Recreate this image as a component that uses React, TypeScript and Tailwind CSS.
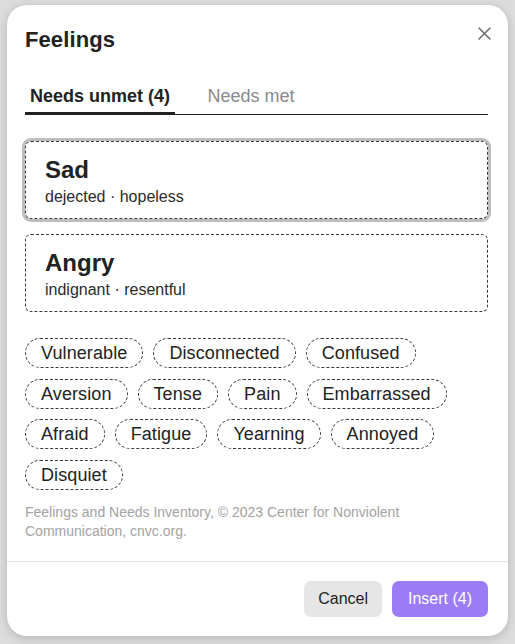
import { useState } from "react";

const FEELINGS = [
  { title: "Sad", words: "dejected · hopeless" },
  { title: "Angry", words: "indignant · resentful" },
];

const CHIPS = [
  "Vulnerable",
  "Disconnected",
  "Confused",
  "Aversion",
  "Tense",
  "Pain",
  "Embarrassed",
  "Afraid",
  "Fatigue",
  "Yearning",
  "Annoyed",
  "Disquiet",
];

function CloseIcon() {
  return (
    <svg width="13" height="13" viewBox="0 0 13 13" fill="none">
      <path d="M1 1L12 12M12 1L1 12" stroke="#6b6b6b" strokeWidth="1.5" strokeLinecap="round" />
    </svg>
  );
}

export default function App() {
  const [tab, setTab] = useState<"unmet" | "met">("unmet");

  return (
    <div
      className="h-[644px] w-[515px] overflow-hidden bg-[#dcdcdc] pl-[7px] pt-[5px]"
      style={{ fontFamily: '"Liberation Sans", Arial, sans-serif' }}
    >
      <div className="relative flex h-[631px] w-[501px] flex-col rounded-[20px] bg-white text-[#222] shadow-[0_2px_10px_rgba(0,0,0,0.18)]">
        <button className="absolute right-[17px] top-[21px] flex h-[14px] w-[14px] items-center justify-center" aria-label="Close">
          <CloseIcon />
        </button>

        <div className="flex flex-1 flex-col pl-[18px] pr-[20px]">
          <h2 className="mt-[20px] h-[30px] text-[22px] font-bold leading-[30px] tracking-[0.1px]">Feelings</h2>

          {/* tabs */}
          <div className="mt-[26px] flex border-b border-[#222]">
            <button
              onClick={() => setTab("unmet")}
              className={`-mb-px flex h-[34px] w-[150px] items-start justify-center border-b-[3px] pt-[4px] text-[18px] leading-[22px] ${
                tab === "unmet" ? "border-[#222] font-bold text-[#222]" : "border-transparent text-[#8a8a8a]"
              }`}
            >
              Needs unmet (4)
            </button>
            <button
              onClick={() => setTab("met")}
              className={`-mb-px ml-[29px] flex h-[34px] w-[94px] items-start justify-center border-b-[3px] pt-[4px] text-[18px] leading-[22px] ${
                tab === "met" ? "border-[#222] font-bold text-[#222]" : "border-transparent text-[#8a8a8a]"
              }`}
            >
              Needs met
            </button>
          </div>

          {/* selected feelings */}
          <div className="mt-[26px] flex flex-col gap-[15px]">
            {FEELINGS.map((f, i) => (
              <div
                key={f.title}
                className={`flex h-[78px] flex-col rounded-[6px] border border-dashed border-[#3a3a3a] px-[19px] pt-[13px] ${
                  i === 0 ? "shadow-[0_0_0_3px_#bdbdbd]" : ""
                }`}
              >
                <div className="text-[24px] font-bold leading-[30px]">{f.title}</div>
                <div className="mt-[2px] text-[16px] leading-[20px] text-[#2a2a2a]">{f.words}</div>
              </div>
            ))}
          </div>

          {/* feeling chips */}
          <div className="mt-[26px] flex flex-wrap gap-x-[10px] gap-y-[10.5px]">
            {CHIPS.map((c) => (
              <button
                key={c}
                className="flex h-[30px] items-center rounded-full border border-dashed border-[#3a3a3a] px-[15px] text-[18px] leading-[22px] tracking-[0.1px] text-[#222]"
              >
                {c}
              </button>
            ))}
          </div>

          <p className="mt-[13px] text-[14px] leading-[19px] text-[#a3a3a3]">
            Feelings and Needs Inventory, © 2023 Center for Nonviolent Communication, cnvc.org.
          </p>
        </div>

        {/* footer */}
        <div className="flex h-[75px] items-start justify-end gap-[10px] border-t border-[#e3e3e3] pr-[20px] pt-[19px]">
          <button className="h-[36px] rounded-[7px] bg-[#e6e6e6] px-[14px] text-[16px] text-[#222]">Cancel</button>
          <button className="h-[36px] rounded-[7px] bg-[#9b7bf6] px-[16px] text-[16px] font-medium text-white">
            Insert (4)
          </button>
        </div>
      </div>
    </div>
  );
}
